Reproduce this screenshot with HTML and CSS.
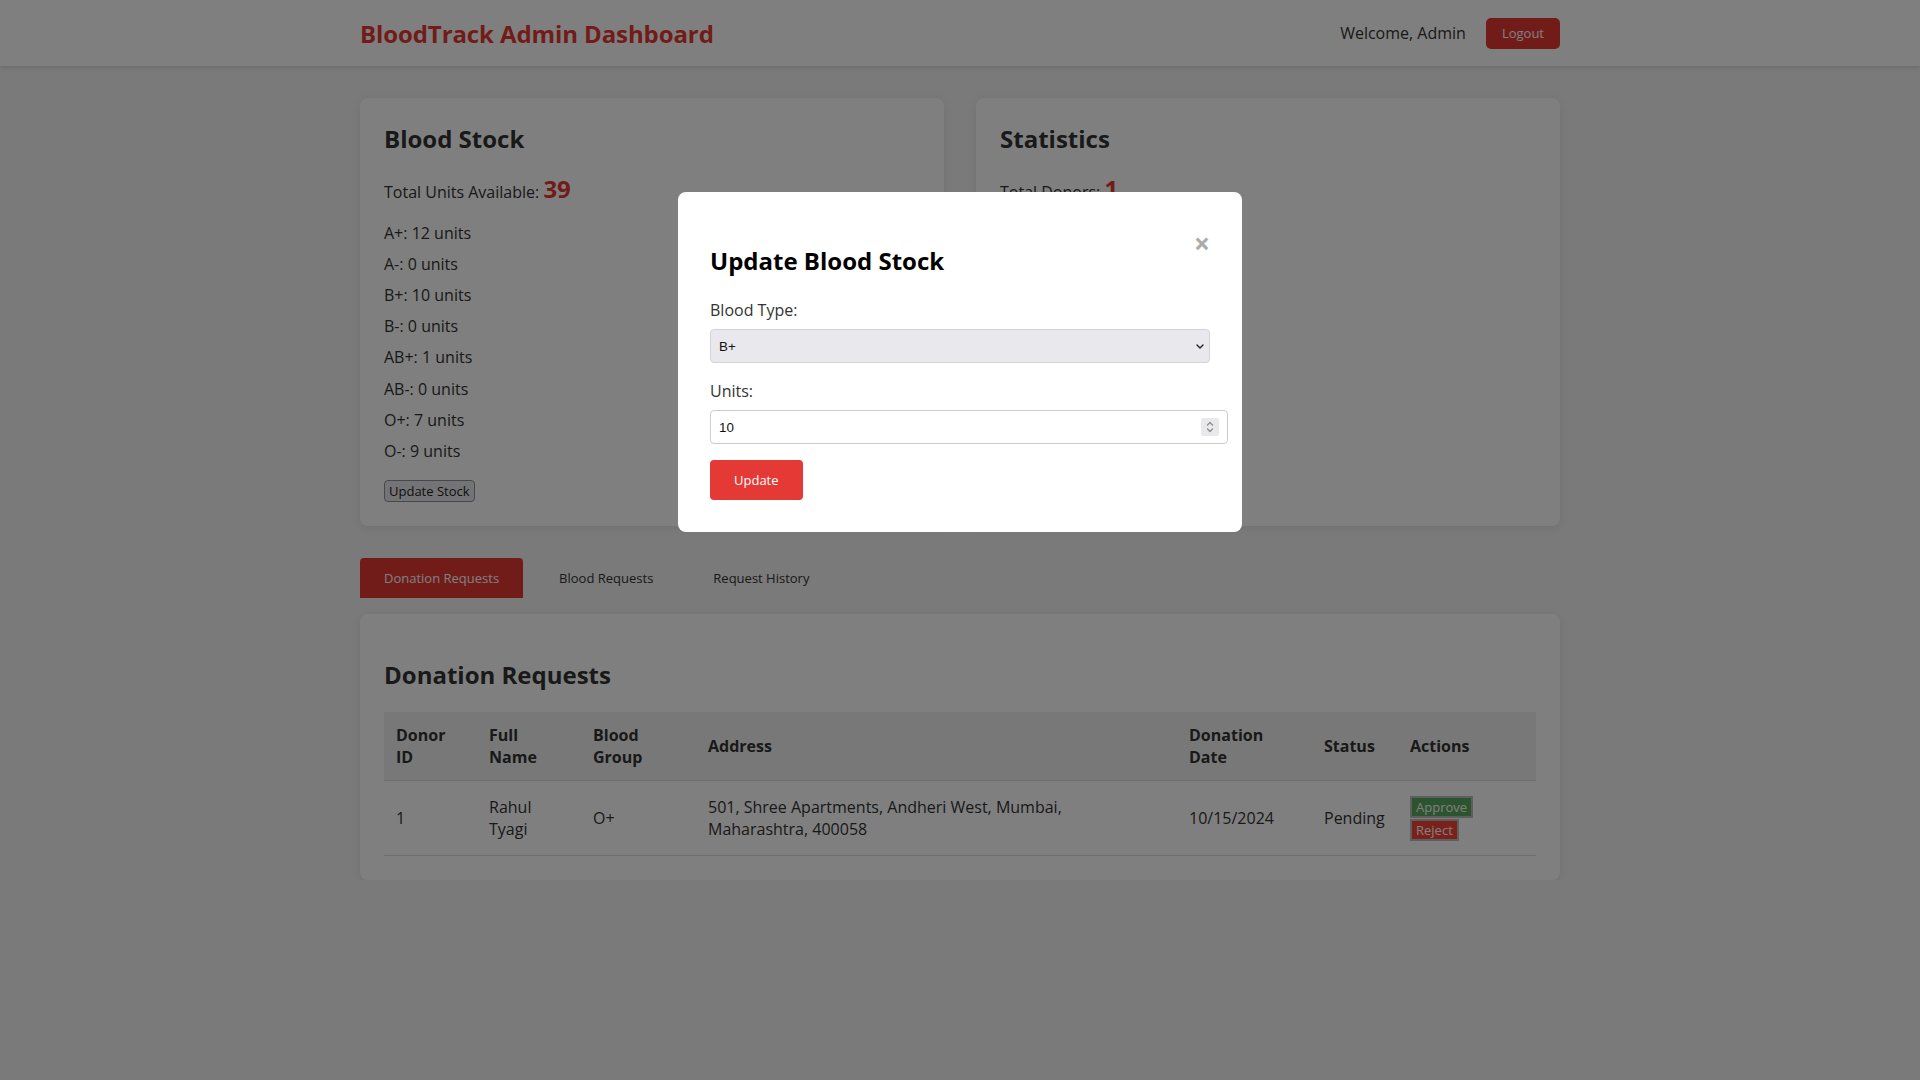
FILE: index.html
```html
<!DOCTYPE html>
<html lang="en">
<head>
<meta charset="utf-8">
<title>BloodTrack Admin Dashboard</title>
<link rel="stylesheet" href="styles.css">
</head>
<body>
<header class="topbar">
  <div class="topbar-inner">
    <h1 class="brand">BloodTrack Admin Dashboard</h1>
    <div class="user-area">
      <span class="welcome">Welcome, Admin</span>
      <button class="btn-logout">Logout</button>
    </div>
  </div>
</header>

<main class="container">
  <div class="overview">
    <section class="card">
      <h2 class="card-title">Blood Stock</h2>
      <p class="total">Total Units Available: <span class="big-num">39</span></p>
      <ul class="stock-list">
        <li>A+: 12 units</li>
        <li>A-: 0 units</li>
        <li>B+: 10 units</li>
        <li>B-: 0 units</li>
        <li>AB+: 1 units</li>
        <li>AB-: 0 units</li>
        <li>O+: 7 units</li>
        <li>O-: 9 units</li>
      </ul>
      <button class="btn-plain">Update Stock</button>
    </section>
    <section class="card">
      <h2 class="card-title">Statistics</h2>
      <p class="total">Total Donors: <span class="big-num">1</span></p>
      <p class="total">Total Requests: <span class="big-num">1</span></p>
      <p class="total">Pending: <span class="big-num">1</span></p>
    </section>
  </div>

  <nav class="tabs">
    <button class="tab active">Donation Requests</button>
    <button class="tab">Blood Requests</button>
    <button class="tab">Request History</button>
  </nav>

  <section class="card panel">
    <h2 class="panel-title">Donation Requests</h2>
    <table class="req-table">
      <colgroup>
        <col class="c-id"><col class="c-name"><col class="c-group"><col class="c-addr"><col class="c-date"><col class="c-status"><col class="c-actions">
      </colgroup>
      <thead>
        <tr>
          <th>Donor ID</th>
          <th>Full Name</th>
          <th>Blood Group</th>
          <th>Address</th>
          <th>Donation Date</th>
          <th>Status</th>
          <th>Actions</th>
        </tr>
      </thead>
      <tbody>
        <tr>
          <td>1</td>
          <td>Rahul Tyagi</td>
          <td>O+</td>
          <td class="addr">501, Shree Apartments, Andheri West, Mumbai, Maharashtra, 400058</td>
          <td>10/15/2024</td>
          <td>Pending</td>
          <td><button class="btn-act approve">Approve</button> <button class="btn-act reject">Reject</button></td>
        </tr>
      </tbody>
    </table>
  </section>
</main>

<div class="overlay">
  <div class="modal">
    <span class="close">&times;</span>
    <h2 class="modal-title">Update Blood Stock</h2>
    <form class="modal-form">
      <label class="field-label">Blood Type:</label>
      <div class="select-wrap">
        <select class="field-select">
          <option>A+</option><option>A-</option><option selected>B+</option><option>B-</option>
          <option>AB+</option><option>AB-</option><option>O+</option><option>O-</option>
        </select>
        <svg class="chev" width="8" height="5" viewBox="0 0 8 5"><path d="M1 1 L4 4 L7 1" fill="none" stroke="#222" stroke-width="1.4" stroke-linecap="round" stroke-linejoin="round"/></svg>
      </div>
      <label class="field-label">Units:</label>
      <div class="number-wrap">
        <input class="field-input" type="number" value="10">
        <span class="spinner">
          <svg width="18" height="18" viewBox="0 0 18 18"><path d="M6.5 7 L9 4.5 L11.5 7" fill="none" stroke="#8a8a8a" stroke-width="1.2" stroke-linecap="round" stroke-linejoin="round"/><path d="M6.5 11 L9 13.5 L11.5 11" fill="none" stroke="#8a8a8a" stroke-width="1.2" stroke-linecap="round" stroke-linejoin="round"/></svg>
        </span>
      </div>
      <button type="button" class="btn-primary">Update</button>
    </form>
  </div>
</div>
</body>
</html>
```

FILE: styles.css
```css
body {
  margin: 0;
  font-family: "Open Sans", "Noto Sans", sans-serif;
  font-size: 16px;
  color: #333;
  background: #f4f4f4;
}

/* Top bar */
.topbar {
  background: #fff;
  box-shadow: 0 2px 4px rgba(0, 0, 0, 0.1);
}
.topbar-inner {
  width: 1200px;
  height: 66px;
  margin: 0 auto;
  display: flex;
  align-items: center;
  justify-content: space-between;
}
.brand {
  margin: 0;
  font-size: 24px;
  font-weight: 700;
  letter-spacing: -0.1px;
  color: #e53935;
}
.user-area {
  display: flex;
  align-items: center;
  gap: 20px;
}
.welcome {
  font-size: 16px;
  color: #333;
}
.btn-logout {
  height: 31px;
  padding: 0 16px;
  border: none;
  border-radius: 5px;
  background: #e53935;
  color: #fff;
  font: 13px "Open Sans", sans-serif;
}

/* Layout */
.container {
  width: 1200px;
  margin: 0 auto;
  padding-top: 32px;
}
.overview {
  display: grid;
  grid-template-columns: 1fr 1fr;
  gap: 32px;
}
.card {
  background: #fff;
  border-radius: 8px;
  padding: 24px;
  box-shadow: 0 2px 8px rgba(0, 0, 0, 0.08);
}
.card-title {
  margin: 0 0 17px;
  font-size: 24px;
  font-weight: 700;
  color: #333;
}
.total {
  margin: 0 0 12px;
}
.big-num {
  font-size: 24px;
  font-weight: 700;
  color: #e53935;
}
.stock-list {
  list-style: none;
  margin: 0;
  padding: 0;
}
.stock-list li {
  padding: 4.6px 0;
}
.btn-plain {
  display: block;
  margin-top: 13px;
  padding: 1px 4px;
  border: 1px solid #8f8f9d;
  border-radius: 4px;
  background: #e9e9ed;
  color: #222;
  font: 13px "Open Sans", sans-serif;
}

/* Tabs */
.tabs {
  display: flex;
  gap: 12px;
  margin: 32px 0 16px;
}
.tab {
  padding: 11px 24px;
  border: none;
  border-radius: 4px 4px 0 0;
  background: transparent;
  color: #333;
  font: 13px "Open Sans", sans-serif;
}
.tab.active {
  background: #e53935;
  color: #fff;
}

/* Requests panel */
.panel-title {
  margin: 20px 0 21px;
  font-size: 24px;
  font-weight: 700;
}
.req-table {
  width: 100%;
  border-collapse: collapse;
  table-layout: fixed;
}
.c-id { width: 93px; }
.c-name { width: 104px; }
.c-group { width: 115px; }
.c-addr { width: 481px; }
.c-date { width: 135px; }
.c-status { width: 86px; }
.c-actions { width: 138px; }
.req-table th,
.req-table td {
  padding: 12px 16px 12px 12px;
  border-bottom: 1px solid #ddd;
  text-align: left;
  vertical-align: middle;
}
.req-table th {
  background: #f0f0f0;
  font-weight: 700;
}
.req-table td {
  padding-top: 14px;
  padding-bottom: 14px;
}
.req-table td.addr {
  padding-right: 40px;
}
.btn-act {
  padding: 0 4px;
  border: 2px solid #bdbdbd;
  color: #fff;
  font: 13px "Open Sans", sans-serif;
}
.approve { background: #58a85c; }
.reject { background: #f44336; }

/* Modal */
.overlay {
  position: fixed;
  inset: 0;
  background: rgba(0, 0, 0, 0.5);
}
.modal {
  width: 500px;
  margin: 10% auto;
  padding: 32px;
  background: #fff;
  border-radius: 8px;
}
.close {
  float: right;
  font-size: 28px;
  font-weight: 700;
  color: #aaa;
}
.modal-title {
  margin: 20px 0 22px;
  font-size: 24px;
  font-weight: 700;
  color: #000;
}
.field-label {
  display: block;
  margin-bottom: 8px;
  color: #333;
}
.select-wrap {
  position: relative;
  margin-bottom: 17px;
}
.field-select {
  display: block;
  box-sizing: border-box;
  width: 100%;
  height: 34px;
  padding: 0 8px;
  border: 1px solid #d4d4d8;
  border-radius: 4px;
  background: #e9e9ed;
  color: #111;
  font: 13.33px "Liberation Sans", Arial, sans-serif;
  appearance: none;
  -webkit-appearance: none;
}
.chev {
  position: absolute;
  right: 6px;
  top: 15px;
  pointer-events: none;
}
.number-wrap {
  position: relative;
  width: calc(100% + 18px);
  margin-bottom: 16px;
}
.field-input {
  display: block;
  box-sizing: border-box;
  width: 100%;
  height: 34px;
  padding: 0 8px;
  border: 1px solid #ccc;
  border-radius: 4px;
  color: #111;
  font: 13.33px "Liberation Sans", Arial, sans-serif;
  appearance: textfield;
  -moz-appearance: textfield;
}
.field-input::-webkit-inner-spin-button,
.field-input::-webkit-outer-spin-button {
  -webkit-appearance: none;
  margin: 0;
}
.spinner {
  position: absolute;
  right: 9px;
  top: 8px;
  width: 18px;
  height: 18px;
  background: #e9e9ed;
  border-radius: 2px;
}
.spinner svg {
  display: block;
}
.btn-primary {
  height: 40px;
  padding: 0 24px;
  border: none;
  border-radius: 4px;
  background: #e53935;
  color: #fff;
  font: 13px "Open Sans", sans-serif;
}
```
